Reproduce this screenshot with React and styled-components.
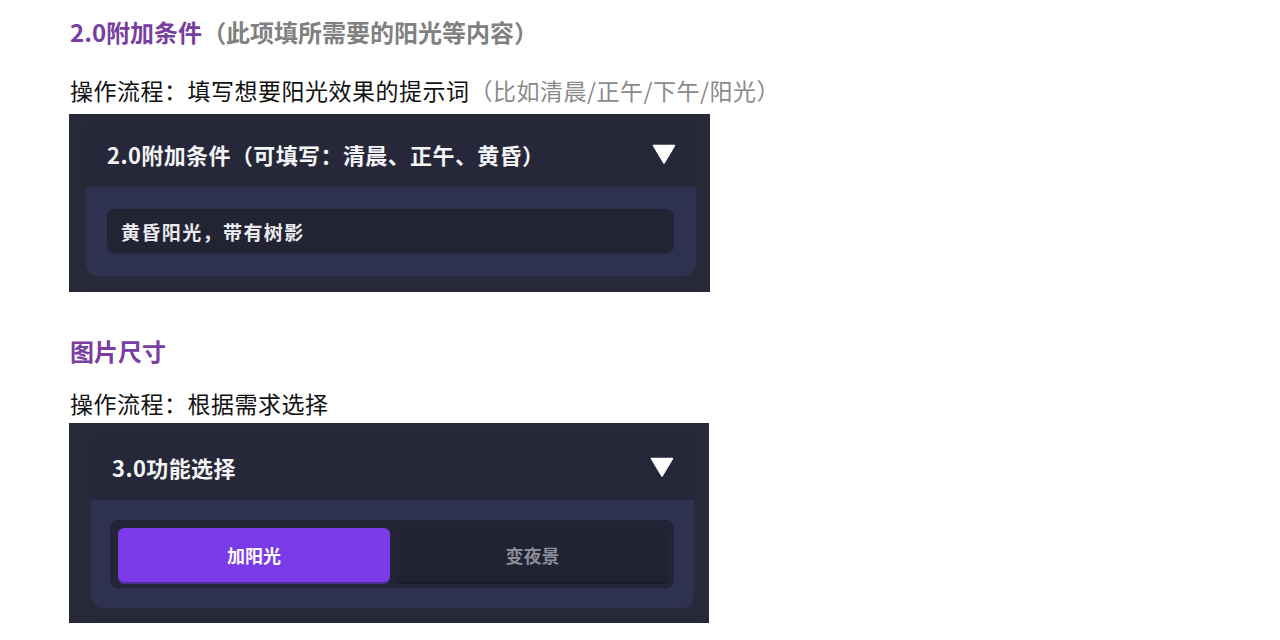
import React from 'react';
import styled, { createGlobalStyle } from 'styled-components';

const GlobalStyle = createGlobalStyle`
  html, body {
    margin: 0;
    padding: 0;
    background: #ffffff;
  }
  body {
    font-family: "Noto Sans CJK SC", "Noto Sans", sans-serif;
  }
`;

const Page = styled.main`
  display: flex;
  flex-direction: column;
  padding: 14px 0 0 69px;
  width: 1280px;
  height: 640px;
  box-sizing: border-box;
  overflow: hidden;
`;

const Heading = styled.h3`
  margin: ${(p) => p.$top || 0}px 0 0 1px;
  font-size: 24px;
  line-height: 36px;
  font-weight: 700;
  color: #783ea0;
  span {
    color: #808080;
  }
`;

const Para = styled.p`
  margin: ${(p) => p.$top || 0}px 0 0 1px;
  font-size: 23px;
  line-height: 36px;
  color: #111;
  letter-spacing: 0.5px;
  span {
    color: #8a8a8a;
  }
`;

const Shot = styled.div`
  display: flex;
  flex-direction: column;
  gap: 11px;
  margin-top: ${(p) => p.$top || 0}px;
  width: ${(p) => p.$w}px;
  height: ${(p) => p.$h}px;
  padding: ${(p) => p.$pad};
  box-sizing: border-box;
  background: #272838;
  overflow: hidden;
`;

const Card = styled.section`
  flex-shrink: 0;
  border-radius: 12px;
  overflow: hidden;
  background: #2f3150;
`;

const CardHeader = styled.div`
  display: flex;
  align-items: center;
  justify-content: space-between;
  height: 67px;
  padding: 0 20px 0 21px;
  background: #262839;
  color: #f4f4f6;
  font-size: 22px;
  font-weight: 700;
  letter-spacing: 0.4px;
`;

const CardBody = styled.div`
  padding: ${(p) => p.$pad || '22px 22px 22px 21px'};
`;

const Input = styled.div`
  display: flex;
  align-items: center;
  height: 45px;
  padding: 0 14px;
  border-radius: 8px;
  background: #222333;
  color: #eaeaee;
  font-size: 19px;
  font-weight: 700;
  letter-spacing: 1.4px;
  box-shadow: inset 0 -1px 0 rgba(255, 255, 255, 0.04);
`;

const Segmented = styled.div`
  display: grid;
  grid-template-columns: 272px 1fr;
  gap: 7px;
  height: 68px;
  padding: 8px 6px 6px 8px;
  box-sizing: border-box;
  border-radius: 8px;
  background: #232435;
`;

const SegButton = styled.div`
  display: flex;
  align-items: center;
  justify-content: center;
  height: 54px;
  border-radius: 6px;
  background: ${(p) => (p.$active ? '#7a3ae8' : '#212232')};
  color: ${(p) => (p.$active ? '#ffffff' : '#8c8d9a')};
  font-size: 18px;
  font-weight: 700;
  box-shadow: ${(p) =>
    p.$active ? '0 2px 0 #4b2f94' : '0 2px 0 rgba(0, 0, 0, 0.25)'};
`;

const Stub = styled.div`
  height: 40px;
  flex-shrink: 0;
  border-radius: 12px 12px 0 0;
  background: #262839;
`;

const Caret = () => (
  <svg width="24" height="20" viewBox="0 0 24 20">
    <path d="M1.5 1.5 H22.5 L12 19 Z" fill="#ffffff" strokeLinejoin="round" stroke="#ffffff" strokeWidth="1.5" />
  </svg>
);

export default function App() {
  return (
    <>
      <GlobalStyle />
      <Page>
        <Heading>
          2.0附加条件<span>（此项填所需要的阳光等内容）</span>
        </Heading>
        <Para $top={22}>
          操作流程：填写想要阳光效果的提示词<span>（比如清晨/正午/下午/阳光）</span>
        </Para>
        <Shot $top={6} $w={641} $h={178} $pad="6px 14px 0 17px">
          <Card>
            <CardHeader>
              2.0附加条件（可填写：清晨、正午、黄昏）
              <Caret />
            </CardHeader>
            <CardBody>
              <Input>黄昏阳光，带有树影</Input>
            </CardBody>
          </Card>
          <Stub />
        </Shot>

        <Heading $top={41}>图片尺寸</Heading>
        <Para $top={16}>操作流程：根据需求选择</Para>
        <Shot $top={2} $w={640} $h={200} $pad="10px 15px 0 22px">
          <Card>
            <CardHeader>
              3.0功能选择
              <Caret />
            </CardHeader>
            <CardBody $pad="20px 20px 20px 19px">
              <Segmented>
                <SegButton $active>加阳光</SegButton>
                <SegButton>变夜景</SegButton>
              </Segmented>
            </CardBody>
          </Card>
          <Stub />
        </Shot>
      </Page>
    </>
  );
}
